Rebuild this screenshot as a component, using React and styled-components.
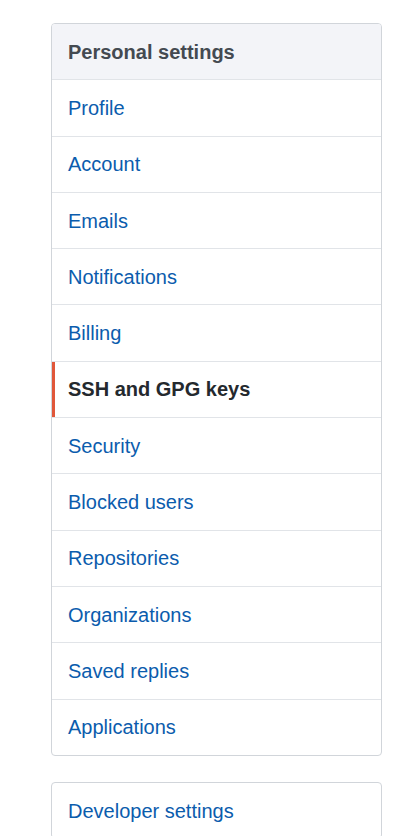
import React from "react";
import styled, { createGlobalStyle } from "styled-components";

const GlobalStyle = createGlobalStyle`
  html, body {
    margin: 0;
    padding: 0;
    background: #ffffff;
  }
  body {
    font-family: "Liberation Sans", Arial, sans-serif;
  }
`;

const personal = [
  "Profile",
  "Account",
  "Emails",
  "Notifications",
  "Billing",
  "SSH and GPG keys",
  "Security",
  "Blocked users",
  "Repositories",
  "Organizations",
  "Saved replies",
  "Applications",
];

function App() {
  const selected = "SSH and GPG keys";
  return (
    <>
      <GlobalStyle />
      <Page>
        <Menu>
          <MenuHeading>Personal settings</MenuHeading>
          {personal.map(item => (
            <MenuItem key={item} selected={item === selected}>
              {item}
            </MenuItem>
          ))}
        </Menu>
        <Menu>
          <MenuItem>Developer settings</MenuItem>
        </Menu>
      </Page>
    </>
  );
}

const Page = styled.div`
  display: flex;
  flex-direction: column;
  gap: 26px;
  padding: 23px 30px 0 51px;
  height: 836px;
  box-sizing: border-box;
  overflow: hidden;
`;

const Menu = styled.nav`
  width: 331px;
  box-sizing: border-box;
  border: 1px solid #d1d5da;
  border-radius: 4px;
  background: #ffffff;
  flex-shrink: 0;
`;

const MenuHeading = styled.div`
  display: flex;
  align-items: center;
  height: 56.3px;
  padding: 1px 16px 0;
  box-sizing: border-box;
  background: #f3f4f8;
  border-bottom: 1px solid #e1e4e8;
  border-radius: 3px 3px 0 0;
  font-size: 20px;
  font-weight: bold;
  color: #444a51;
`;

const MenuItem = styled.a`
  position: relative;
  display: flex;
  align-items: center;
  height: 54.3px;
  padding: 1px 16px 0;
  font-size: 20px;
  font-weight: ${p => (p.selected ? "bold" : "normal")};
  color: ${p => (p.selected ? "#24292e" : "#0b5cad")};
  text-decoration: none;
  border-bottom: 1px solid #e1e4e8;
  cursor: pointer;

  &:last-child {
    border-bottom: none;
  }

  &::before {
    content: "";
    display: ${p => (p.selected ? "block" : "none")};
    position: absolute;
    left: 0;
    top: 0;
    bottom: 0;
    width: 3px;
    background: #e0573a;
  }
`;

export default App;
